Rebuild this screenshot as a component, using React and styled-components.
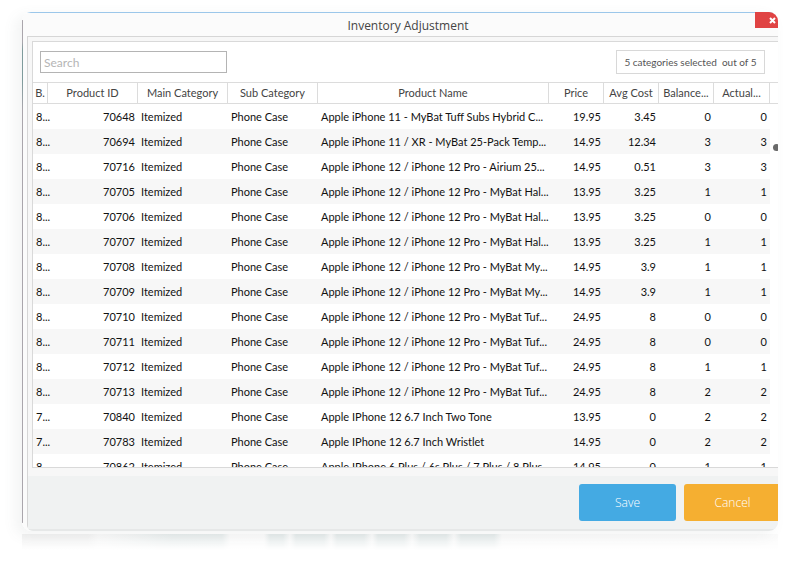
import React from "react";
import styled, { createGlobalStyle } from "styled-components";

const columns = [
  { title: "B.", width: 15 },
  { title: "Product ID", width: 90, right: true },
  { title: "Main Category", width: 90 },
  { title: "Sub Category", width: 90 },
  { title: "Product Name" },
  { title: "Price", width: 55, right: true },
  { title: "Avg Cost", width: 55, right: true },
  { title: "Balance...", width: 55, right: true },
  { title: "Actual...", width: 56, right: true },
];

const products = [
  ["8...", "70648", "Apple iPhone 11 - MyBat Tuff Subs Hybrid C...", "19.95", "3.45", "0"],
  ["8...", "70694", "Apple iPhone 11 / XR - MyBat 25-Pack Temp...", "14.95", "12.34", "3"],
  ["8...", "70716", "Apple iPhone 12 / iPhone 12 Pro - Airium 25...", "14.95", "0.51", "3"],
  ["8...", "70705", "Apple iPhone 12 / iPhone 12 Pro - MyBat Hal...", "13.95", "3.25", "1"],
  ["8...", "70706", "Apple iPhone 12 / iPhone 12 Pro - MyBat Hal...", "13.95", "3.25", "0"],
  ["8...", "70707", "Apple iPhone 12 / iPhone 12 Pro - MyBat Hal...", "13.95", "3.25", "1"],
  ["8...", "70708", "Apple iPhone 12 / iPhone 12 Pro - MyBat My...", "14.95", "3.9", "1"],
  ["8...", "70709", "Apple iPhone 12 / iPhone 12 Pro - MyBat My...", "14.95", "3.9", "1"],
  ["8...", "70710", "Apple iPhone 12 / iPhone 12 Pro - MyBat Tuf...", "24.95", "8", "0"],
  ["8...", "70711", "Apple iPhone 12 / iPhone 12 Pro - MyBat Tuf...", "24.95", "8", "0"],
  ["8...", "70712", "Apple iPhone 12 / iPhone 12 Pro - MyBat Tuf...", "24.95", "8", "1"],
  ["8...", "70713", "Apple iPhone 12 / iPhone 12 Pro - MyBat Tuf...", "24.95", "8", "2"],
  ["7...", "70840", "Apple IPhone 12 6.7 Inch Two Tone", "13.95", "0", "2"],
  ["7...", "70783", "Apple IPhone 12 6.7 Inch Wristlet", "14.95", "0", "2"],
  ["8...", "70862", "Apple IPhone 6 Plus / 6s Plus / 7 Plus / 8 Plus...", "14.95", "0", "1"],
];

const App = () => {
  return (
    <>
      <GlobalStyle />
      <Page>
        <Shell>
          <Window>
            <TitleBar>
              <Title>Inventory Adjustment</Title>
              <CloseButton aria-label="Close">
                <svg width="7" height="7" viewBox="0 0 7 7">
                  <path d="M1 1L6 6M6 1L1 6" stroke="#fff" strokeWidth="2" />
                </svg>
              </CloseButton>
            </TitleBar>
            <Frame>
              <Panel>
                <Toolbar>
                  <SearchInput type="text" placeholder="Search" aria-label="Search" />
                  <CategoryButton>5 categories selected&nbsp; out of 5</CategoryButton>
                </Toolbar>
                <TableView>
                  <Table>
                    <colgroup>
                      {columns.map((column) => (
                        <Col key={column.title} $width={column.width} />
                      ))}
                      <Col $width={18} />
                    </colgroup>
                    <thead>
                      <tr>
                        {columns.map((column) => (
                          <Th key={column.title}>{column.title}</Th>
                        ))}
                        <Th as="td" />
                      </tr>
                    </thead>
                    <tbody>
                      {products.map(([batch, id, name, price, cost, count]) => (
                        <Row key={id}>
                          {[batch, id, "Itemized", "Phone Case", name, price, cost, count, count].map(
                            (value, index) => (
                              <Td key={columns[index].title} $right={columns[index].right}>
                                {value}
                              </Td>
                            )
                          )}
                          <td />
                        </Row>
                      ))}
                    </tbody>
                  </Table>
                  <ScrollThumb />
                </TableView>
              </Panel>
              <Footer>
                <ActionButton $color="#44aae3">Save</ActionButton>
                <ActionButton $color="#f5af31">Cancel</ActionButton>
              </Footer>
            </Frame>
          </Window>
        </Shell>
        <Reflection />
      </Page>
    </>
  );
};

const GlobalStyle = createGlobalStyle`
  * {
    box-sizing: border-box;
  }
  body {
    margin: 0;
    background: #fff;
    font-family: Lato, "Open Sans", sans-serif;
    font-size: 11px;
    color: #111;
  }
  button, input {
    font-family: inherit;
  }
`;

const Page = styled.main`
  padding: 12px 23px 0 22px;
  overflow: hidden;
`;

const Shell = styled.div`
  position: relative;
  overflow: hidden;
  border-radius: 9px;
  box-shadow: -6px 4px 14px rgba(90, 100, 100, 0.08);
  &::before {
    content: "";
    position: absolute;
    z-index: 1;
    left: 0;
    top: 8px;
    bottom: 8px;
    width: 1px;
    background: linear-gradient(#aaa6ac 22px, #7f9b9c 30px, #7f9b9c 60px, #aaa6ac 90px);
  }
`;

/* the window runs on past the right edge of the shell */
const Window = styled.section`
  width: calc(100% + 16px);
  padding-left: 5px;
  background: #fbfbfb;
  border-top: 1px solid #9cc7ea;
`;

const TitleBar = styled.header`
  display: flex;
  align-items: flex-start;
  height: 23px;
`;

const Title = styled.h1`
  flex: 1;
  margin: 0;
  padding-left: 34px;
  font-family: "Open Sans", sans-serif;
  font-size: 12px;
  font-weight: 400;
  line-height: 26px;
  text-align: center;
  color: #444;
`;

const CloseButton = styled.button`
  display: flex;
  align-items: center;
  justify-content: center;
  width: 35px;
  height: 16px;
  margin: -1px 4px 0 0;
  padding: 0;
  border: 0;
  background: #e04343;
`;

const Frame = styled.div`
  border: 1px solid #d6d6d6;
  border-bottom: 2px solid #e6e8e8;
  border-bottom-left-radius: 6px;
  background: #f7f7f7;
  padding-top: 4px;
`;

const Panel = styled.div`
  margin: 0 4px 8px;
  border: 1px solid #d9d9d9;
  background: #fff;
`;

const Toolbar = styled.div`
  display: flex;
  align-items: center;
  justify-content: space-between;
  height: 40px;
  padding: 0 23px 0 7px;
`;

const SearchInput = styled.input`
  width: 187px;
  height: 22px;
  padding: 0 3px;
  border: 1px solid #b4b4b4;
  border-radius: 0;
  font-size: 12px;
  &::placeholder {
    color: #b5b5b5;
  }
`;

const CategoryButton = styled.button`
  width: 149px;
  height: 24px;
  padding: 0;
  border: 1px solid #d8d8d8;
  background: #fff;
  font-size: 10px;
  color: #555;
`;

const TableView = styled.div`
  position: relative;
  height: 385px;
  overflow: hidden;
`;

const Table = styled.table`
  width: 100%;
  table-layout: fixed;
  border-collapse: separate;
  border-spacing: 0;
`;

const Col = styled.col`
  width: ${({ $width }) => ($width ? `${$width}px` : "auto")};
`;

const Th = styled.th`
  height: 22px;
  padding: 0;
  border: solid #dcdcdc;
  border-width: 1px 1px 1px 0;
  font-weight: 400;
  line-height: 20px;
  white-space: nowrap;
  color: #444;
`;

const Td = styled.td`
  height: 25px;
  padding: 0 3px;
  line-height: 25px;
  text-align: ${({ $right }) => ($right ? "right" : "left")};
  white-space: nowrap;
`;

const Row = styled.tr`
  &:nth-child(even) ${Td} {
    background: #f7f7f7;
  }
`;

const ScrollThumb = styled.span`
  position: absolute;
  top: 62px;
  right: 8px;
  width: 7px;
  height: 7px;
  border-radius: 50%;
  background: #6a6a6a;
`;

const Footer = styled.footer`
  display: flex;
  justify-content: flex-end;
  gap: 8px;
  padding: 8px 12px 8px 0;
  background: #f0f2f2;
`;

const ActionButton = styled.button`
  width: 97px;
  height: 37px;
  padding: 0;
  border: 0;
  border-radius: 3px;
  background: ${({ $color }) => $color};
  font-family: "Open Sans", sans-serif;
  font-size: 12px;
  font-weight: 300;
  color: #fff;
`;

const Reflection = styled.div`
  height: 16px;
  margin-top: 3px;
  background: linear-gradient(rgba(255, 255, 255, 0.1), #fff),
    linear-gradient(
      90deg,
      #f0f0f0 66px,
      #f8f8f8 76px,
      #f0f2f2 110px,
      #e4eaea 150px,
      #e4eaea 200px,
      #fafafa 208px,
      #fafafa 242px,
      #e1e8e8 248px,
      #e1e8e8 261px,
      #f9f9f9 268px,
      #e1e8e8 274px,
      #e1e8e8 302px,
      #f9f9f9 309px,
      #e1e8e8 315px,
      #e1e8e8 342px,
      #f9f9f9 350px,
      #e1e8e8 356px,
      #e1e8e8 382px,
      #f9f9f9 390px,
      #e1e8e8 398px,
      #e1e8e8 424px,
      #f9f9f9 432px,
      #e1e8e8 439px,
      #e1e8e8 472px,
      #fafafa 480px
    );
`;

export default App;
